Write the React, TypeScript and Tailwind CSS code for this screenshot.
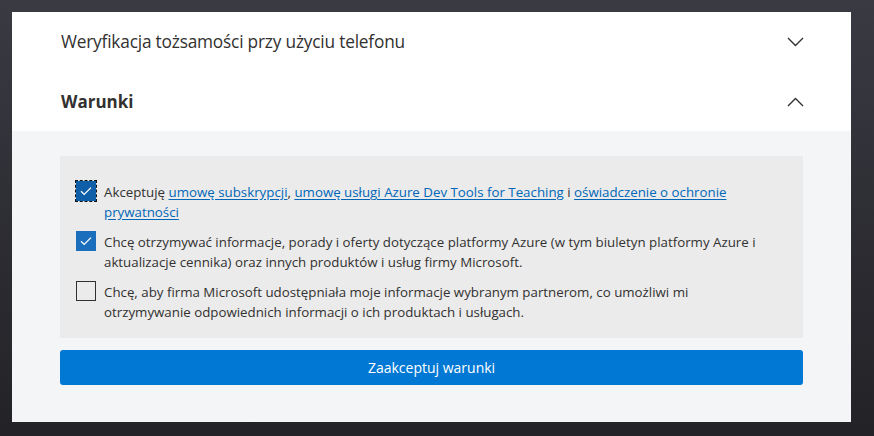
const font = { fontFamily: '"Open Sans", "Noto Sans", sans-serif' };

function Chevron({ up }: { up?: boolean }) {
  return (
    <svg width="17" height="10" viewBox="0 0 17 10" fill="none">
      <path d={up ? "M1 9l7.5-7.5L16 9" : "M1 1l7.5 7.5L16 1"} stroke="#323130" strokeWidth="1.4" />
    </svg>
  );
}

function Check({ checked, focused }: { checked: boolean; focused?: boolean }) {
  if (!checked) {
    return <span className="mt-[-1px] block h-[20px] w-[20px] shrink-0 border border-[#323130] bg-transparent" />;
  }
  return (
    <span
      className={
        "mt-[-1px] flex h-[20px] w-[20px] shrink-0 items-center justify-center " +
        (focused ? "bg-[#0f5ea8] outline-1 outline-dashed outline-[#111]" : "bg-[#1b6ebc]")
      }
    >
      <svg width="14" height="14" viewBox="0 0 14 14" fill="none">
        <path d="M2 7.2l3.2 3.2L12 3.6" stroke="white" strokeWidth="1.3" />
      </svg>
    </span>
  );
}

const link = "text-[#0067b8] underline underline-offset-2";

export default function App() {
  return (
    <div
      className="h-[436px] w-[874px] overflow-hidden bg-[linear-gradient(180deg,#3a3a43_0%,#2b2b31_60%,#232327_100%)] pl-[12px] pt-[12px]"
      style={font}
    >
      <div className="flex h-[410px] w-[839px] flex-col bg-white text-[#323130]">
        <div className="flex h-[60px] items-center justify-between pl-[49px] pr-[47px]">
          <span className="text-[17.3px] tracking-[-0.2px]">Weryfikacja tożsamości przy użyciu telefonu</span>
          <Chevron />
        </div>
        <div className="flex h-[59px] items-center justify-between pl-[49px] pr-[47px]">
          <span className="text-[17px] font-bold">Warunki</span>
          <Chevron up />
        </div>
        <div className="flex flex-1 flex-col bg-[#f4f5f7] px-[48px] pt-[25px]">
          <div className="flex flex-col gap-[10px] bg-[#ebebeb] pb-[16px] pl-[16px] pr-[20px] pt-[26px] text-[13.3px] leading-[20px]">
            <div className="flex gap-[8px]">
              <Check checked focused />
              <p>
                Akceptuję <a className={link}>umowę subskrypcji</a>,{" "}
                <a className={link}>umowę usługi Azure Dev Tools for Teaching</a> i{" "}
                <a className={link}>oświadczenie o ochronie prywatności</a>
              </p>
            </div>
            <div className="flex gap-[8px]">
              <Check checked />
              <p>
                Chcę otrzymywać informacje, porady i oferty dotyczące platformy Azure (w tym biuletyn platformy Azure i
                aktualizacje cennika) oraz innych produktów i usług firmy Microsoft.
              </p>
            </div>
            <div className="flex gap-[8px]">
              <Check checked={false} />
              <p>
                Chcę, aby firma Microsoft udostępniała moje informacje wybranym partnerom, co umożliwi mi
                <br />
                otrzymywanie odpowiednich informacji o ich produktach i usługach.
              </p>
            </div>
          </div>
          <button className="mt-[12px] flex h-[35px] w-full items-center justify-center rounded-[3px] bg-[#0078d4] text-[14px] text-white">
            Zaakceptuj warunki
          </button>
        </div>
      </div>
    </div>
  );
}
